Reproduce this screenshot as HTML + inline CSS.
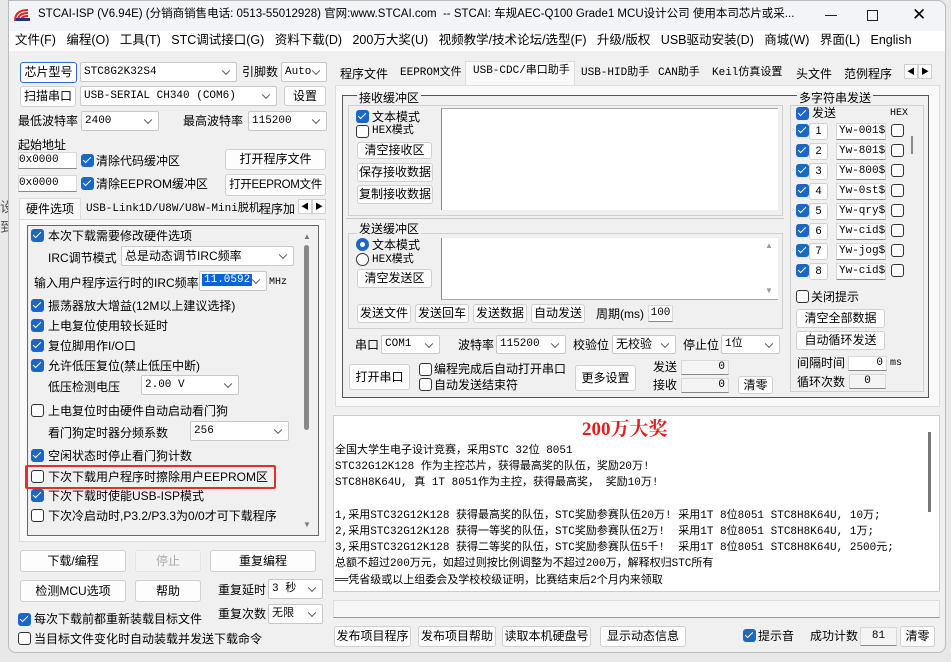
<!DOCTYPE html>
<html><head><meta charset="utf-8"><style>
*{box-sizing:border-box;margin:0;padding:0}
body{width:951px;height:662px;overflow:hidden;background:#e8e8e8;font-family:"Liberation Sans","Noto Sans CJK SC",sans-serif;font-size:12px;color:#000;position:relative}
.a{position:absolute;white-space:nowrap;line-height:1}
.m{font-family:"Liberation Mono","Noto Sans CJK SC",monospace;font-size:11px}
.b{position:absolute;background:#fdfdfd;border:1px solid #d0d0d0;border-radius:3px;text-align:center;white-space:nowrap;font-size:12px}
.c{position:absolute;background:#fff;border:1px solid #c8c8c8;border-radius:2px;white-space:nowrap;padding-left:3px;font-size:11px;font-family:"Liberation Mono","Noto Sans CJK SC",monospace}
.c:after{content:"";position:absolute;right:7px;top:50%;width:5px;height:5px;border-right:1px solid #555;border-bottom:1px solid #555;transform:translateY(-70%) rotate(45deg)}
.w{position:absolute;background:#fff;border:1px solid #d8d8d8;border-bottom:1px solid #888;font-size:11px;white-space:nowrap;font-family:"Liberation Mono",monospace}
.k{position:absolute;width:13px;height:13px;border-radius:3px;background:#1a67c8}
.k:after{content:"";position:absolute;left:4px;top:1px;width:3px;height:7px;border-right:1.6px solid #fff;border-bottom:1.6px solid #fff;transform:rotate(45deg)}
.u{position:absolute;width:13px;height:13px;border-radius:3px;border:1px solid #333;background:#fff}
.g{position:absolute;border:1px solid #d0d0d0}
</style></head><body>
<div class="a" style="left:0;top:200px;color:#555;font-size:14px">设</div>
<div class="a" style="left:0;top:220px;color:#555;font-size:14px">到</div>
<div style="position:absolute;left:8px;top:0;width:938px;height:653px;background:#f0f0f0;border:1px solid #bbb;border-radius:0 8px 8px 8px"></div>
<div style="position:absolute;left:9px;top:1px;width:936px;height:30px;background:#f3f4f8;border-radius:0 8px 0 0"></div>
<div style="position:absolute;left:9px;top:31px;width:936px;height:20px;background:#fff"></div>
<svg style="position:absolute;left:14px;top:8px" width="18" height="14"><path d="M1 13 Q1 2 14 2 M4 13 Q4 5 14 5 M7 13 Q7 8 14 8" stroke="#d22" stroke-width="2" fill="none"/><rect x="2" y="10" width="14" height="3" fill="#237"/></svg>
<div class="a" style="left:38px;top:9px;font-size:11.5px">STCAI-ISP (V6.94E) (分销商销售电话: 0513-55012928) 官网:www.STCAI.com&nbsp; -- STCAI: 车规AEC-Q100 Grade1 MCU设计公司 使用本司芯片或采...</div>
<div style="position:absolute;left:825px;top:15px;width:12px;height:1px;background:#222"></div>
<div style="position:absolute;left:867px;top:10px;width:11px;height:11px;border:1px solid #222"></div>
<div class="a" style="left:912px;top:6px;font-size:17px">✕</div>
<div class="a" style="left:15px;top:34px;font-size:12.5px">文件(F)&nbsp;&nbsp;&nbsp;编程(O)&nbsp;&nbsp;&nbsp;工具(T)&nbsp;&nbsp;&nbsp;STC调试接口(G)&nbsp;&nbsp;&nbsp;资料下载(D)&nbsp;&nbsp;&nbsp;200万大奖(U)&nbsp;&nbsp;&nbsp;视频教学/技术论坛/选型(F)&nbsp;&nbsp;&nbsp;升级/版权&nbsp;&nbsp;&nbsp;USB驱动安装(D)&nbsp;&nbsp;&nbsp;商城(W)&nbsp;&nbsp;&nbsp;界面(L)&nbsp;&nbsp;&nbsp;English</div>

<div class="b" style="left:20px;top:62px;width:57px;height:21px;line-height:18px;border-color:#2a6ccf">芯片型号</div>
<div class="c" style="left:80px;top:62px;width:157px;height:20px;line-height:18px">STC8G2K32S4</div>
<div class="a" style="left:242px;top:66px">引脚数</div>
<div class="c" style="left:281px;top:62px;width:46px;height:20px;line-height:18px">Auto</div>
<div class="b" style="left:20px;top:86px;width:56px;height:21px;line-height:18px">扫描串口</div>
<div class="c" style="left:80px;top:86px;width:197px;height:20px;line-height:18px">USB-SERIAL CH340 (COM6)</div>
<div class="b" style="left:284px;top:86px;width:42px;height:20px;line-height:18px">设置</div>
<div class="a" style="left:18px;top:115px">最低波特率</div>
<div class="c" style="left:81px;top:111px;width:78px;height:20px;line-height:18px">2400</div>
<div class="a" style="left:183px;top:115px">最高波特率</div>
<div class="c" style="left:248px;top:111px;width:79px;height:20px;line-height:18px">115200</div>
<div class="a" style="left:18px;top:139px">起始地址</div>
<div class="w" style="left:18px;top:152px;width:59px;height:17px;line-height:15px">0x0000</div>
<div class="k" style="left:81px;top:154px"></div><div class="a" style="left:96px;top:155px">清除代码缓冲区</div>
<div class="b" style="left:225px;top:149px;width:101px;height:21px;line-height:19px">打开程序文件</div>
<div class="w" style="left:18px;top:175px;width:59px;height:17px;line-height:15px">0x0000</div>
<div class="k" style="left:81px;top:177px"></div><div class="a" style="left:96px;top:178px">清除EEPROM缓冲区</div>
<div class="b" style="left:225px;top:174px;width:101px;height:22px;line-height:20px;font-size:11.5px;letter-spacing:-0.3px">打开EEPROM文件</div>
<div style="position:absolute;left:19px;top:198px;width:62px;height:22px;background:#f9f9f9;border:1px solid #ddd;border-bottom:none"></div>
<div class="a" style="left:26px;top:203px">硬件选项</div>
<div class="a m" style="left:86px;top:204px">USB-Link1D/U8W/U8W-Mini脱机</div>
<div class="a" style="left:259px;top:203px">程序加</div>
<div class="b" style="left:298px;top:199px;width:14px;height:15px;font-size:8px;line-height:13px;border-radius:0">◀</div>
<div class="b" style="left:312px;top:199px;width:14px;height:15px;font-size:8px;line-height:13px;border-radius:0">▶</div>
<div style="position:absolute;left:19px;top:219px;width:307px;height:323px;background:#f9f9f9;border:1px solid #ddd"></div>
<div style="position:absolute;left:27px;top:225px;width:292px;height:311px;border:1px solid #666;background:#f0f0f0"></div>
<div style="position:absolute;left:304px;top:245px;width:5px;height:185px;background:#888;border-radius:3px"></div>
<div class="a" style="left:303px;top:233px;font-size:8px;color:#777">▲</div>
<div class="a" style="left:303px;top:521px;font-size:8px;color:#777">▼</div>
<div class="k" style="left:31px;top:229px"></div><div class="a" style="left:48px;top:230px">本次下载需要修改硬件选项</div>
<div class="a" style="left:48px;top:252px">IRC调节模式</div>
<div class="c" style="left:121px;top:246px;width:173px;height:20px;line-height:18px;font-family:'Liberation Sans','Noto Sans CJK SC',sans-serif;font-size:12px">总是动态调节IRC频率</div>
<div class="a" style="left:34px;top:277px">输入用户程序运行时的IRC频率</div>
<div class="c" style="left:199px;top:271px;width:68px;height:20px;padding:2px"><span style="background:#0a64d8;color:#fff;padding:0 2px">11.0592</span></div>
<div class="a m" style="left:269px;top:278px;font-size:10px">MHz</div>
<div class="k" style="left:31px;top:299px"></div><div class="a" style="left:48px;top:300px">振荡器放大增益(12M以上建议选择)</div>
<div class="k" style="left:31px;top:319px"></div><div class="a" style="left:48px;top:320px">上电复位使用较长延时</div>
<div class="k" style="left:31px;top:339px"></div><div class="a" style="left:48px;top:340px">复位脚用作I/O口</div>
<div class="k" style="left:31px;top:359px"></div><div class="a" style="left:48px;top:360px">允许低压复位(禁止低压中断)</div>
<div class="a" style="left:48px;top:381px">低压检测电压</div>
<div class="c" style="left:141px;top:375px;width:98px;height:20px;line-height:18px">2.00 V</div>
<div class="u" style="left:31px;top:404px"></div><div class="a" style="left:48px;top:405px">上电复位时由硬件自动启动看门狗</div>
<div class="a" style="left:48px;top:427px">看门狗定时器分频系数</div>
<div class="c" style="left:190px;top:421px;width:99px;height:20px;line-height:18px">256</div>
<div class="k" style="left:31px;top:449px"></div><div class="a" style="left:48px;top:450px">空闲状态时停止看门狗计数</div>
<div style="position:absolute;left:25px;top:465px;width:251px;height:24px;border:2px solid #e0302a;border-radius:2px"></div>
<div class="u" style="left:31px;top:470px"></div><div class="a" style="left:48px;top:471px">下次下载用户程序时擦除用户EEPROM区</div>
<div class="k" style="left:31px;top:489px"></div><div class="a" style="left:48px;top:490px">下次下载时使能USB-ISP模式</div>
<div class="u" style="left:31px;top:509px"></div><div class="a" style="left:48px;top:510px">下次冷启动时,P3.2/P3.3为0/0才可下载程序</div>
<div class="b" style="left:20px;top:550px;width:106px;height:22px;line-height:20px">下载/编程</div>
<div class="b" style="left:135px;top:550px;width:66px;height:22px;line-height:20px;color:#aaa;background:#f4f4f4;border-color:#e4e4e4">停止</div>
<div class="b" style="left:210px;top:550px;width:106px;height:22px;line-height:20px">重复编程</div>
<div class="b" style="left:20px;top:580px;width:106px;height:22px;line-height:20px">检测MCU选项</div>
<div class="b" style="left:135px;top:580px;width:66px;height:22px;line-height:20px">帮助</div>
<div class="a" style="left:218px;top:584px">重复延时</div>
<div class="c" style="left:268px;top:579px;width:55px;height:20px;line-height:18px">3 秒</div>
<div class="a" style="left:218px;top:608px">重复次数</div>
<div class="c" style="left:268px;top:604px;width:55px;height:20px;line-height:18px">无限</div>
<div class="k" style="left:18px;top:613px"></div><div class="a" style="left:34px;top:613px">每次下载前都重新装载目标文件</div>
<div class="u" style="left:18px;top:632px"></div><div class="a" style="left:34px;top:633px">当目标文件变化时自动装载并发送下载命令</div>

<div class="a" style="left:340px;top:68px">程序文件</div>
<div class="a m" style="left:400px;top:68px">EEPROM文件</div>
<div style="position:absolute;left:465px;top:61px;width:110px;height:25px;background:#f9f9f9;border:1px solid #ddd;border-bottom:none"></div>
<div class="a m" style="left:473px;top:66px">USB-CDC/串口助手</div>
<div class="a m" style="left:581px;top:68px">USB-HID助手</div>
<div class="a m" style="left:658px;top:68px">CAN助手</div>
<div class="a m" style="left:712px;top:68px">Keil仿真设置</div>
<div class="a" style="left:796px;top:68px">头文件</div>
<div class="a" style="left:844px;top:68px">范例程序</div>
<div class="b" style="left:904px;top:64px;width:14px;height:15px;font-size:8px;line-height:13px;border-radius:0">◀</div>
<div class="b" style="left:918px;top:64px;width:14px;height:15px;font-size:8px;line-height:13px;border-radius:0">▶</div>
<div style="position:absolute;left:335px;top:85px;width:605px;height:322px;background:#f9f9f9;border:1px solid #ddd"></div>
<div style="position:absolute;left:342px;top:95px;width:587px;height:303px;border:1px solid #555;background:#f0f0f0"></div>
<div class="g" style="left:348px;top:105px;width:435px;height:111px"></div>
<div class="a" style="left:357px;top:92px;background:#f0f0f0;padding:0 2px">接收缓冲区</div>
<div class="k" style="left:356px;top:110px"></div><div class="a" style="left:372px;top:111px">文本模式</div>
<div class="u" style="left:356px;top:125px"></div><div class="a m" style="left:372px;top:126px">HEX模式</div>
<div class="b" style="left:357px;top:142px;width:75px;height:17px;line-height:15px">清空接收区</div>
<div class="b" style="left:357px;top:163px;width:76px;height:19px;line-height:17px">保存接收数据</div>
<div class="b" style="left:357px;top:185px;width:76px;height:19px;line-height:17px">复制接收数据</div>
<div style="position:absolute;left:441px;top:108px;width:337px;height:102px;background:#fff;border-left:1px solid #888;border-top:1px solid #aaa"></div>
<div style="position:absolute;left:346px;top:218px;width:438px;height:1px;background:#bcd"></div>
<div class="g" style="left:348px;top:233px;width:435px;height:96px"></div>
<div class="a" style="left:357px;top:223px;background:#f0f0f0;padding:0 2px">发送缓冲区</div>
<div style="position:absolute;left:356px;top:238px;width:13px;height:13px;border-radius:50%;background:#1a67c8"><div style="position:absolute;left:4px;top:4px;width:5px;height:5px;border-radius:50%;background:#fff"></div></div>
<div class="a" style="left:372px;top:239px">文本模式</div>
<div style="position:absolute;left:356px;top:253px;width:13px;height:13px;border-radius:50%;border:1px solid #333;background:#fff"></div>
<div class="a m" style="left:372px;top:255px">HEX模式</div>
<div class="b" style="left:357px;top:269px;width:75px;height:19px;line-height:17px">清空发送区</div>
<div style="position:absolute;left:441px;top:238px;width:337px;height:62px;background:#fff;border-left:1px solid #888;border-bottom:1px solid #aaa"></div>
<div class="a" style="left:765px;top:242px;font-size:8px;color:#999">▲</div>
<div class="a" style="left:765px;top:287px;font-size:8px;color:#999">▼</div>
<div class="b" style="left:357px;top:304px;width:54px;height:19px;line-height:17px">发送文件</div>
<div class="b" style="left:415px;top:304px;width:54px;height:19px;line-height:17px">发送回车</div>
<div class="b" style="left:473px;top:304px;width:54px;height:19px;line-height:17px">发送数据</div>
<div class="b" style="left:531px;top:304px;width:54px;height:19px;line-height:17px">自动发送</div>
<div class="a" style="left:596px;top:308px">周期(ms)</div>
<div class="w" style="left:648px;top:305px;width:25px;height:17px;line-height:15px;text-align:center">100</div>
<div class="a" style="left:355px;top:339px">串口</div>
<div class="c" style="left:381px;top:335px;width:59px;height:19px;line-height:17px">COM1</div>
<div class="a" style="left:458px;top:339px">波特率</div>
<div class="c" style="left:496px;top:335px;width:70px;height:19px;line-height:17px">115200</div>
<div class="a" style="left:573px;top:339px">校验位</div>
<div class="c" style="left:612px;top:335px;width:64px;height:19px;line-height:17px;font-family:'Liberation Sans','Noto Sans CJK SC';font-size:12px">无校验</div>
<div class="a" style="left:683px;top:339px">停止位</div>
<div class="c" style="left:721px;top:335px;width:59px;height:19px;line-height:17px">1位</div>
<div class="b" style="left:349px;top:364px;width:61px;height:26px;line-height:24px">打开串口</div>
<div class="u" style="left:419px;top:363px"></div><div class="a" style="left:434px;top:363px">编程完成后自动打开串口</div>
<div class="u" style="left:419px;top:378px"></div><div class="a" style="left:434px;top:379px">自动发送结束符</div>
<div class="b" style="left:575px;top:365px;width:61px;height:26px;line-height:24px">更多设置</div>
<div class="a" style="left:653px;top:361px">发送</div>
<div class="w" style="left:681px;top:360px;width:48px;height:15px;text-align:right;padding-right:3px;background:#f4f4f4">0</div>
<div class="a" style="left:653px;top:379px">接收</div>
<div class="w" style="left:681px;top:378px;width:48px;height:15px;text-align:right;padding-right:3px;background:#f4f4f4">0</div>
<div class="b" style="left:738px;top:376px;width:35px;height:18px;line-height:16px">清零</div>
<div class="g" style="left:790px;top:105px;width:134px;height:287px"></div>
<div class="a" style="left:797px;top:92px;background:#f0f0f0;padding:0 2px">多字符串发送</div>
<div class="k" style="left:796px;top:107px"></div><div class="a" style="left:812px;top:107px">发送</div>
<div class="a m" style="left:890px;top:109px;font-size:10px">HEX</div>
<div style="position:absolute;left:911px;top:136px;width:2px;height:18px;background:#888"></div>
<div id="rows"></div>
<div class="u" style="left:796px;top:290px"></div><div class="a" style="left:811px;top:291px">关闭提示</div>
<div class="b" style="left:796px;top:309px;width:89px;height:19px;line-height:17px">清空全部数据</div>
<div class="b" style="left:796px;top:331px;width:89px;height:19px;line-height:17px">自动循环发送</div>
<div class="a" style="left:797px;top:357px">间隔时间</div>
<div class="w" style="left:848px;top:356px;width:39px;height:15px;text-align:right;padding-right:3px">0</div>
<div class="a m" style="left:890px;top:359px;font-size:10px">ms</div>
<div class="a" style="left:797px;top:376px">循环次数</div>
<div class="w" style="left:849px;top:374px;width:37px;height:15px;text-align:center;background:#f4f4f4">0</div>
<div style="position:absolute;left:333px;top:415px;width:607px;height:177px;background:#fff;border:1px solid #ccc"></div>
<div style="position:absolute;left:928px;top:432px;width:3px;height:80px;background:#777"></div>
<div class="a" style="left:582px;top:420px;color:#e02020;font-family:'Liberation Serif','Noto Serif CJK SC',serif;font-weight:bold;font-size:19px">200万大奖</div>
<div style="position:absolute;left:335px;top:443px;font-family:'Liberation Mono','Noto Sans CJK SC',monospace;font-size:11px;line-height:16.2px;white-space:pre">全国大学生电子设计竞赛，采用STC 32位 8051
STC32G12K128 作为主控芯片，获得最高奖的队伍，奖励20万!
STC8H8K64U, 真 1T 8051作为主控，获得最高奖， 奖励10万!

1,采用STC32G12K128 获得最高奖的队伍，STC奖励参赛队伍20万! 采用1T 8位8051 STC8H8K64U, 10万;
2,采用STC32G12K128 获得一等奖的队伍，STC奖励参赛队伍2万!  采用1T 8位8051 STC8H8K64U, 1万;
3,采用STC32G12K128 获得二等奖的队伍，STC奖励参赛队伍5千!  采用1T 8位8051 STC8H8K64U, 2500元;
总额不超过200万元，如超过则按比例调整为不超过200万，解释权归STC所有
══凭省级或以上组委会及学校校级证明，比赛结束后2个月内来领取</div>
<div style="position:absolute;left:333px;top:600px;width:607px;height:18px;background:#f7f7f7;border:1px solid #ddd;border-bottom:1px solid #999"></div>
<div class="b" style="left:334px;top:626px;width:77px;height:21px;line-height:19px">发布项目程序</div>
<div class="b" style="left:418px;top:626px;width:78px;height:21px;line-height:19px">发布项目帮助</div>
<div class="b" style="left:502px;top:626px;width:89px;height:21px;line-height:19px">读取本机硬盘号</div>
<div class="b" style="left:600px;top:626px;width:86px;height:21px;line-height:19px">显示动态信息</div>
<div class="k" style="left:743px;top:629px"></div><div class="a" style="left:758px;top:630px">提示音</div>
<div class="a" style="left:810px;top:630px">成功计数</div>
<div class="w" style="left:860px;top:627px;width:37px;height:19px;line-height:17px;text-align:center;background:#f4f4f4">81</div>
<div class="b" style="left:900px;top:626px;width:35px;height:21px;line-height:19px">清零</div>
<script>
var t=["Yw-001$","Yw-801$","Yw-800$","Yw-0st$","Yw-qry$","Yw-cid$","Yw-jog$","Yw-cid$"],h="";
for(var i=0;i<8;i++){var y=123+i*20;
h+='<div class="k" style="left:796px;top:'+(y+1)+'px"></div><div class="b" style="left:809px;top:'+y+'px;width:19px;height:17px;line-height:15px;font-size:11px">'+(i+1)+'</div><div class="w" style="left:836px;top:'+y+'px;width:50px;height:17px;line-height:15px;padding-left:2px">'+t[i]+'</div><div class="u" style="left:891px;top:'+(y+1)+'px"></div>';}
document.getElementById("rows").outerHTML=h;
</script>
</body></html>
